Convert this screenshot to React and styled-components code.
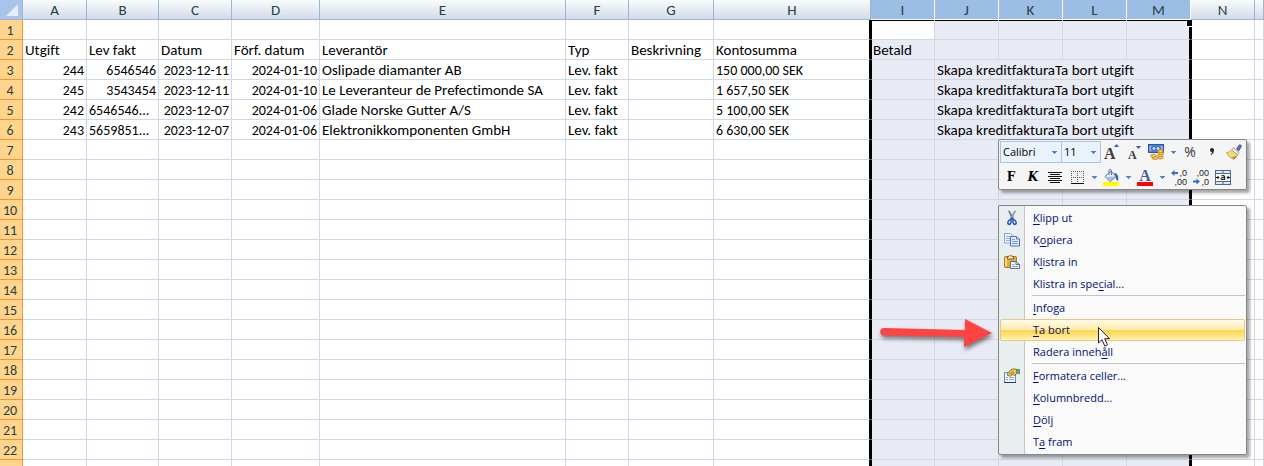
import React from "react";
import styled, { createGlobalStyle, css } from "styled-components";

const GlobalStyle = createGlobalStyle`
  * { box-sizing: border-box; }
  body { margin: 0; background: #fff; }
  button, select { font: inherit; color: inherit; margin: 0; }
`;

const sheetFont = `Carlito, Lato, "Liberation Sans", sans-serif`;
const uiFont = `"Open Sans", "Noto Sans", sans-serif`;

const Workspace = styled.main`
  position: relative;
  height: 100vh;
  overflow: hidden;
  font-family: ${sheetFont};
`;

const Sheet = styled.table`
  width: 100%;
  table-layout: fixed;
  border-collapse: separate;
  border-spacing: 0;
  font-size: 14px;
  line-height: 16px;
  font-variant-ligatures: none;
  color: #000;
`;

const Col = styled.col`
  width: ${(p) => (p.$width ? `${p.$width}px` : "auto")};
`;

const Row = styled.tr`
  height: 20px;
`;

const ColumnHeader = styled.th`
  padding: 2px 0 1px;
  height: 20px;
  font-size: 15px;
  font-weight: 400;
  text-align: center;
  color: #27413e;
  border-right: 1px solid #9eb6ce;
  border-bottom: 1px solid #9eb6ce;
  background: linear-gradient(#f9fcfd, #d3dbe9);
  ${(p) =>
    p.$selected &&
    css`
      background: #9cbee4;
      border-color: #fff;
    `}
`;

const Corner = styled.td`
  padding: 0;
  height: 20px;
  background: #a9c4e9;
  border-right: 1px solid #9eb6ce;
  border-bottom: 1px solid #9eb6ce;

  svg { display: block; margin: 0 4px 0 auto; }
`;

const RowHeader = styled.th`
  padding: 3px 2px 0 0;
  font-weight: 400;
  text-align: center;
  color: #27413e;
  background: #ffd58d;
  border-right: 1px solid #f79333;
  border-bottom: 1px solid #f79333;
`;

const Cell = styled.td`
  position: relative;
  padding: ${(p) => (p.$numeric ? "3px 2px 0" : "2px 2px 1px")};
  white-space: nowrap;
  font-size: ${(p) => (p.$numeric ? 14 : 15)}px;
  text-align: ${(p) => (p.$right ? "right" : "left")};
  background: ${(p) => (p.$selected ? "#e8ebf4" : "#fff")};
  border-right: 1px solid #d0d7e5;
  border-bottom: 1px solid #d0d7e5;
  ${(p) => p.$edgeRight && css`border-right: 2px solid #000;`}
  ${(p) => p.$edgeLeft && css`border-left: 1px solid #000; padding-left: 1px;`}
  ${(p) => p.$edgeTop && css`box-shadow: inset 0 1px #000;`}
`;

const FillHandle = styled.span`
  position: absolute;
  z-index: 1;
  top: 1px;
  right: -3px;
  width: 6px;
  height: 6px;
  background: #000;
  border: solid #fff;
  border-width: 0 0 1px 1px;
`;

const Popup = styled.div`
  position: absolute;
  z-index: 2;
  left: 998px;
  width: 249px;
  border: 1px solid #868686;
  border-radius: 2px;
  background: #fafafa;
  box-shadow: 3px 3px 3px rgba(0, 0, 0, 0.35);
  font-family: ${uiFont};
`;

const MiniToolbar = styled(Popup)`
  top: 139px;
  display: grid;
  gap: 3px;
  padding: 1px;
  background: #f5f5f5;
  font-size: 11px;
  color: #000;
`;

const ToolRow = styled.div`
  display: flex;
  height: 22px;
`;

const Combo = styled.label`
  display: flex;
  position: relative;
  align-items: center;
  width: ${(p) => p.$width}px;
  height: 22px;
  margin-right: ${(p) => (p.$joined ? -1 : 0)}px;
  border: 1px solid #aac5e4;
  background: #eaf2fb;

  svg { position: absolute; right: 4px; pointer-events: none; }
`;

const Select = styled.select`
  width: 100%;
  height: 20px;
  padding: 0 0 2px 2px;
  border: 0;
  appearance: none;
  background: transparent;
`;

const ToolButton = styled.button`
  display: flex;
  align-items: center;
  justify-content: center;
  width: ${(p) => (p.$narrow ? 12 : 22)}px;
  height: 22px;
  padding: 0;
  border: 0;
  background: transparent;

  svg { display: block; overflow: visible; }
`;

const Glyph = styled.span`
  font: ${(p) => (p.$italic ? "italic" : "normal")} 700 12px/22px "DejaVu Serif", serif;
`;

const PercentGlyph = styled.span`
  font-size: 14px;
  line-height: 20px;
  color: #333;
`;

const Menu = styled(Popup)`
  top: 205px;
  padding: 1px;
  background: linear-gradient(90deg, #e9eeee 25px, #c5c5c5 25px, #c5c5c5 26px, #fafafa 26px);
`;

const MenuItem = styled.button`
  display: grid;
  grid-template-columns: 22px 1fr;
  column-gap: 10px;
  align-items: center;
  width: 100%;
  height: 22px;
  padding: 0;
  border: 1px solid transparent;
  border-radius: 2px;
  background: transparent;
  text-align: left;
  font-size: 11px;
  line-height: 16px;
  color: #00106e;
  ${(p) =>
    p.$active &&
    css`
      border-color: #e3c98a;
      background: linear-gradient(#fffbe8, #ffecae 48%, #ffd34f 52%, #ffe584 80%, #fff3b5);
    `}

  svg { display: block; margin: 0 auto; }
  u { text-underline-offset: 2px; }
`;

const Separator = styled.hr`
  height: 1px;
  margin: 0 0 1px 32px;
  border: 0;
  background: #c5c5c5;
`;

const Overlay = styled.svg`
  position: absolute;
  z-index: 3;
  left: ${(p) => p.$left}px;
  top: ${(p) => p.$top}px;
  overflow: visible;
  pointer-events: none;
`;

const ArrowShape = styled.path`
  fill: #ff4343;
  filter: drop-shadow(1px 3px 2px rgba(0, 0, 0, 0.5));
`;

const Caret = () => (
  <svg width="5" height="3" viewBox="0 0 5 3" shapeRendering="crispEdges" aria-hidden="true">
    <path d="M0 0h5v1H4v1H3v1H2V2H1V1H0z" fill="#5584bd" />
  </svg>
);

const GrowFont = () => (
  <svg width="16" height="18" viewBox="0 0 16 18">
    <text x="0" y="16" fontFamily="Liberation Serif" fontWeight="700" fontSize="16" fill="#3a3a3a">A</text>
    <path d="M10 4l2.500-3L15 4z" fill="#2f5fa8" />
  </svg>
);

const ShrinkFont = () => (
  <svg width="16" height="18" viewBox="0 0 16 18">
    <text x="2" y="16" fontFamily="Liberation Serif" fontWeight="700" fontSize="12" fill="#3a3a3a">A</text>
    <path d="M10 3h5l-2.500 3z" fill="#2f5fa8" />
  </svg>
);

const Currency = () => (
  <svg width="16" height="16" viewBox="0 0 16 16">
    <rect x="0.500" y="0.500" width="15" height="8" fill="#4d7fd2" stroke="#2c549f" />
    <path d="M3 2C1.500 3.500 1.500 5.500 3 7M13 2c1.500 1.500 1.500 3.500 0 5" fill="none" stroke="#d8e8ff" />
    <circle cx="6" cy="4.500" r="2" fill="#c4daf7" stroke="#2c549f" strokeWidth="0.700" />
    <circle cx="10" cy="4.500" r="2" fill="#c4daf7" stroke="#2c549f" strokeWidth="0.700" />
    <g fill="#f8cb52" stroke="#b5781a" strokeWidth="0.700">
      <ellipse cx="12.500" cy="13.500" rx="2.800" ry="1.500" />
      <ellipse cx="12.500" cy="11.300" rx="2.800" ry="1.500" />
      <ellipse cx="12.500" cy="9.100" rx="2.800" ry="1.500" />
      <ellipse cx="12.500" cy="7" rx="2.800" ry="1.500" />
      <ellipse cx="7" cy="14" rx="3" ry="1.500" />
      <ellipse cx="5.500" cy="11.700" rx="3" ry="1.500" />
    </g>
  </svg>
);

const CommaGlyph = () => (
  <svg width="6" height="8" viewBox="0 0 6 8">
    <path d="M1 2a2 2 0 1 1 4 0c0 2-1 4-3 5l-.5-.6C2.600 5.600 3 4.800 3 4 1.800 4 1 3.200 1 2z" fill="#222" />
  </svg>
);

const Brush = () => (
  <svg width="16" height="16" viewBox="0 0 16 16">
    <path d="M10.500 5L13 1.200c1-1 3 0 2.200 1.600L12.700 7z" fill="#5f6db5" stroke="#454f88" strokeWidth="0.800" />
    <path d="M7.500 3.500l5.500 5-1.500 2.500-6-5z" fill="#e9edf3" stroke="#858a94" strokeWidth="0.800" />
    <path d="M5.500 6l6 5-3.500 4.500C5 14.500 2 12 0.500 8.500 2.500 8.500 4 7.500 5.500 6z" fill="#f6dc78" stroke="#b99a41" strokeWidth="0.800" />
    <path d="M5 13c2 1 3 1.500 3.500 2L11 11.500c-2 1.500-3.500 2-6 1.500z" fill="#8b7330" />
  </svg>
);

const AlignCenter = () => (
  <svg width="14" height="11" viewBox="0 0 14 11">
    <path d="M0 .5h14M2 2.500h10M0 4.500h14M2 6.500h10M0 8.500h14M2 10.500h10" stroke="#111" />
  </svg>
);

const BottomBorder = () => (
  <svg width="13" height="13" viewBox="0 0 13 13">
    <path d="M0 .5h13M0 6.500h13M.5 0v12M6.500 0v12M12.500 0v12" stroke="#555" strokeDasharray="1 1" />
    <path d="M0 12.500h13" stroke="#111" />
  </svg>
);

const FillColor = () => (
  <svg width="16" height="17" viewBox="0 0 16 17">
    <path d="M2 7.500L8 2l5 5.500L7 12.500z" fill="#e4eefa" stroke="#5c7396" />
    <path d="M3.500 8L12 7.500 7 12z" fill="#a4bfe2" />
    <path d="M6 6V1.500C6 0 8.500 0 8.500 1.500V6" fill="none" stroke="#5c7396" />
    <path d="M11 4c3.500 0 5 3 4 8-2-1-2.500-3-2.500-5z" fill="#3466b8" />
    <rect y="13" width="16" height="4" fill="#ff0" />
  </svg>
);

const FontColor = () => (
  <svg width="16" height="17" viewBox="0 0 16 17">
    <text x="8" y="12" textAnchor="middle" fontFamily="Liberation Serif" fontWeight="700" fontSize="16" fill="#44629a">A</text>
    <rect y="13" width="16" height="4" fill="#f00" />
  </svg>
);

const Decimal = ({ increase }) => (
  <svg width="16" height="17" viewBox="0 0 16 17" fontFamily="Liberation Sans" fontSize="9" fill="#222">
    <text x="16" y="7" textAnchor="end">{increase ? ",0" : ",00"}</text>
    <text x="16" y="16" textAnchor="end">{increase ? ",00" : ",0"}</text>
    {increase ? (
      <path d="M0 4L3.500 1v2H7v2H3.500v2z" fill="#2f6fce" />
    ) : (
      <path d="M7 12.500l-3.500-3v2H0v2h3.500v2z" fill="#2f6fce" />
    )}
  </svg>
);

const MergeCenter = () => (
  <svg width="16" height="15" viewBox="0 0 16 15">
    <rect x="0.500" y="0.500" width="15" height="14" fill="#dce8f6" stroke="#4a6890" />
    <rect x="1" y="4" width="14" height="7" fill="#fff" />
    <path d="M0 3.500h16M0 11.500h16M8 0v3M8 12v3" stroke="#4a6890" />
    <text x="8" y="10" textAnchor="middle" fontFamily="Open Sans" fontWeight="700" fontSize="9" fill="#111">a</text>
    <path d="M1 7.500h3M12 7.500h3" stroke="#111" />
    <path d="M2.500 5.500l2 2-2 2zM13.500 5.500l-2 2 2 2z" fill="#111" />
  </svg>
);

const Scissors = () => (
  <svg width="16" height="16" viewBox="0 0 16 16">
    <path d="M4.500 1h1L10 9l-1.500 1z" fill="#6f87a8" stroke="#536884" strokeWidth="0.600" />
    <path d="M11.500 1h-1L6 9l1.500 1z" fill="#c7d3e2" stroke="#5b6f8c" strokeWidth="0.600" />
    <ellipse cx="5.500" cy="12.200" rx="1.500" ry="2.200" transform="rotate(20 5.500 12.200)" fill="#e6eefb" stroke="#2a5bbd" strokeWidth="1.500" />
    <ellipse cx="10.500" cy="12.200" rx="1.500" ry="2.200" transform="rotate(-20 10.500 12.200)" fill="#e6eefb" stroke="#2a5bbd" strokeWidth="1.500" />
    <path d="M6.500 10L8 8l1.500 2" fill="none" stroke="#2a5bbd" strokeWidth="1.500" />
  </svg>
);

const CopyIcon = () => (
  <svg width="16" height="14" viewBox="0 0 16 14">
    <path d="M.5 .5h6l2.500 2.500v7H.5z" fill="#f0f6ff" stroke="#85a4d2" />
    <path d="M2 3.500h4M2 5.500h4M2 7.500h4" stroke="#8fb2e6" />
    <path d="M6.500 3.500h6l3 2.500v7h-9z" fill="#e3eefc" stroke="#4a72b0" />
    <path d="M12.500 3.500V6h3" fill="#fff" stroke="#4a72b0" />
    <path d="M8 6.500h3M8 8.500h6M8 10.500h6" stroke="#6f9be0" />
  </svg>
);

const PasteIcon = () => (
  <svg width="16" height="14" viewBox="0 0 16 14">
    <rect x="0.500" y="1.500" width="12" height="11" rx="1" fill="#e3aa35" stroke="#a87a26" />
    <path d="M2 3v8" stroke="#f9df94" strokeWidth="2" />
    <path d="M3.500 4V1.500H5c0-2 3-2 3 0h1.500V4z" fill="#f7e6a6" stroke="#84662c" />
    <path d="M6.500 6.500h5.500l3.500 3v4h-9z" fill="#edf2f9" stroke="#5c7193" />
    <path d="M12 6.500v3h3.500" fill="none" stroke="#5c7193" />
    <path d="M8 9.500h2.500M8 11.500h6" stroke="#8fa4c6" />
  </svg>
);

const FormatCells = () => (
  <svg width="16" height="16" viewBox="0 0 16 16">
    <path d="M.5 4.500h11v10H.5z" fill="#f3f7fd" stroke="#6b87b4" />
    <path d="M0 14.500h12" stroke="#1f3c78" />
    <path d="M2 9.500h2M5 9.500h5M2 11.500h2M5 11.500h5" stroke="#8ba7d3" />
    <path d="M3 6L7 1.500 9 1h3.500v5L10 7.500 8.500 6.500 6 8.500 5 7.500 4 8z" fill="#e9c455" stroke="#7d6225" strokeWidth="0.800" />
    <path d="M5.500 6L8.500 3.500M7 7l3-2.500" stroke="#7d6225" strokeWidth="0.800" />
    <path d="M12.500 1H16v5.500l-3.500-1z" fill="#6d9c6c" />
  </svg>
);

const columns = [
  ["A", 64], ["B", 72], ["C", 73], ["D", 88], ["E", 246], ["F", 63], ["G", 85], ["H", 157],
  ["I", 64], ["J", 64], ["K", 64], ["L", 64], ["M", 64], ["N", 64], ["", 0],
];

const actions = "Skapa kreditfakturaTa bort utgift";

const data = {
  2: { A: "Utgift", B: "Lev fakt", C: "Datum", D: "Förf. datum", E: "Leverantör", F: "Typ", G: "Beskrivning", H: "Kontosumma", I: "Betald" },
  3: { A: 244, B: 6546546, C: "2023-12-11", D: "2024-01-10", E: "Oslipade diamanter AB", F: "Lev. fakt", H: "150 000,00 SEK", J: actions },
  4: { A: 245, B: 3543454, C: "2023-12-11", D: "2024-01-10", E: "Le Leveranteur de Prefectimonde SA", F: "Lev. fakt", H: "1 657,50 SEK", J: actions },
  5: { A: 242, B: "6546546...", C: "2023-12-07", D: "2024-01-06", E: "Glade Norske Gutter A/S", F: "Lev. fakt", H: "5 100,00 SEK", J: actions },
  6: { A: 243, B: "5659851...", C: "2023-12-07", D: "2024-01-06", E: "Elektronikkomponenten GmbH", F: "Lev. fakt", H: "6 630,00 SEK", J: actions },
};

const lastNumbered = 22;

const isSelected = (name) => name !== "" && "IJKLM".includes(name);

function SheetRow({ number }) {
  const values = data[number] || {};
  const merged = Boolean(values.J);
  return (
    <Row>
      <RowHeader scope="row">{number <= lastNumbered ? number : null}</RowHeader>
      {columns.map(([name]) => {
        if (merged && name !== "" && "KLM".includes(name)) return null;
        const value = values[name];
        const spans = merged && name === "J";
        return (
          <Cell
            key={name || "rest"}
            colSpan={spans ? 4 : 1}
            $numeric={/^\d/.test(String(value ?? ""))}
            $right={typeof value === "number" || /^\d{4}-/.test(value || "")}
            $selected={isSelected(name) && !(name === "I" && number === 1)}
            $edgeTop={isSelected(name) && number === 1}
            $edgeRight={name === "H" || name === "M" || spans}
            $edgeLeft={name === "I" || name === "N"}
          >
            {value}
            {name === "M" && number === 1 && <FillHandle />}
          </Cell>
        );
      })}
    </Row>
  );
}

const menuItems = [
  { label: ["", "K", "lipp ut"], icon: <Scissors /> },
  { label: ["K", "o", "piera"], icon: <CopyIcon /> },
  { label: ["K", "l", "istra in"], icon: <PasteIcon /> },
  { label: ["Klistra in spe", "c", "ial..."] },
  null,
  { label: ["", "I", "nfoga"] },
  { label: ["", "T", "a bort"], active: true },
  { label: ["Radera inneh", "å", "ll"] },
  null,
  { label: ["", "F", "ormatera celler..."], icon: <FormatCells /> },
  { label: ["", "K", "olumnbredd..."] },
  { label: ["", "D", "ölj"] },
  { label: ["T", "a", " fram"] },
];

const Tool = ({ label, narrow, children }) => (
  <ToolButton type="button" aria-label={label} $narrow={narrow}>
    {children}
  </ToolButton>
);

export default function App() {
  return (
    <Workspace>
      <GlobalStyle />
      <Sheet>
        <colgroup>
          <Col $width={23} />
          {columns.map(([name, width]) => <Col key={name || "rest"} $width={width} />)}
        </colgroup>
        <thead>
          <Row>
            <Corner>
              <svg width="12" height="12" viewBox="0 0 12 12" aria-hidden="true">
                <path d="M12 0v12H0z" fill="#e6eef8" />
              </svg>
            </Corner>
            {columns.map(([name]) => (
              <ColumnHeader key={name || "rest"} scope="col" $selected={isSelected(name)}>{name}</ColumnHeader>
            ))}
          </Row>
        </thead>
        <tbody>
          {Array.from({ length: lastNumbered + 1 }, (_, i) => <SheetRow key={i} number={i + 1} />)}
        </tbody>
      </Sheet>

      <MiniToolbar role="toolbar" aria-label="Formatering">
        <ToolRow>
          <Combo $width={62} $joined>
            <Select aria-label="Teckensnitt"><option>Calibri</option></Select>
            <Caret />
          </Combo>
          <Combo $width={40}>
            <Select aria-label="Teckenstorlek"><option>11</option></Select>
            <Caret />
          </Combo>
          <Tool label="Öka teckenstorlek"><GrowFont /></Tool>
          <Tool label="Minska teckenstorlek"><ShrinkFont /></Tool>
          <Tool label="Valutaformat"><Currency /></Tool>
          <Tool label="Fler valutaformat" narrow><Caret /></Tool>
          <Tool label="Procentformat"><PercentGlyph>%</PercentGlyph></Tool>
          <Tool label="Tusentalsavgränsare"><CommaGlyph /></Tool>
          <Tool label="Hämta format"><Brush /></Tool>
        </ToolRow>
        <ToolRow>
          <Tool label="Fet"><Glyph>F</Glyph></Tool>
          <Tool label="Kursiv"><Glyph $italic>K</Glyph></Tool>
          <Tool label="Centrera"><AlignCenter /></Tool>
          <Tool label="Nederkantlinje"><BottomBorder /></Tool>
          <Tool label="Fler kantlinjer" narrow><Caret /></Tool>
          <Tool label="Fyllningsfärg"><FillColor /></Tool>
          <Tool label="Fler fyllningsfärger" narrow><Caret /></Tool>
          <Tool label="Teckenfärg"><FontColor /></Tool>
          <Tool label="Fler teckenfärger" narrow><Caret /></Tool>
          <Tool label="Öka decimal"><Decimal increase /></Tool>
          <Tool label="Minska decimal"><Decimal /></Tool>
          <Tool label="Centrera över kolumner"><MergeCenter /></Tool>
        </ToolRow>
      </MiniToolbar>

      <Menu role="menu">
        {menuItems.map((item, i) =>
          item ? (
            <MenuItem key={i} type="button" role="menuitem" $active={item.active}>
              <span>{item.icon}</span>
              <span>{item.label[0]}<u>{item.label[1]}</u>{item.label[2]}</span>
            </MenuItem>
          ) : (
            <Separator key={i} />
          )
        )}
      </Menu>

      <Overlay $left={880} $top={318} width="114" height="34" viewBox="0 0 114 34" aria-hidden="true">
        <ArrowShape d="M4 10L85 12V1L112 15 84 29V19L4 17.500A3.700 3.700 0 0 1 4 10z" />
      </Overlay>
      <Overlay $left={1098} $top={327} width="13" height="20" viewBox="0 0 13 20" aria-hidden="true">
        <path d="M.5 .5v15.500l3.500-3.300 2.800 6.300 2.700-1.200-2.800-6.100h4.800z" fill="#fff" stroke="#222" />
      </Overlay>
    </Workspace>
  );
}
